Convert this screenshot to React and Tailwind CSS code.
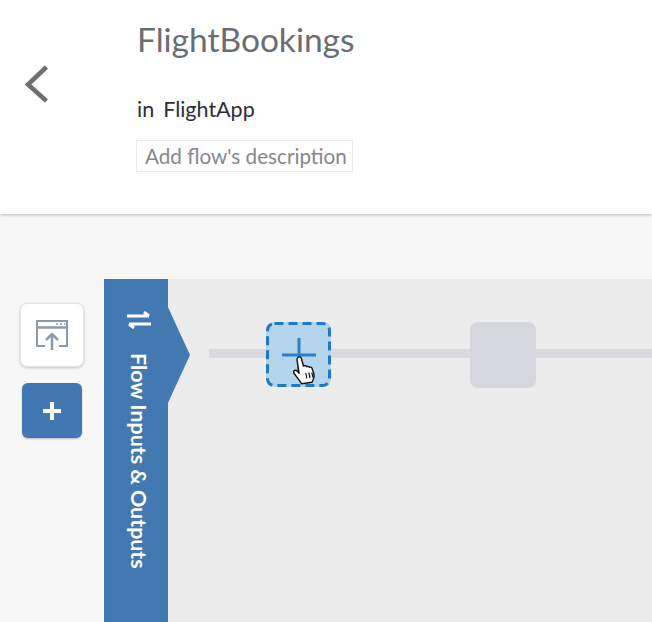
import React from 'react';

function BackChevron() {
  return (
    <svg width="26" height="38" viewBox="0 0 26 38" fill="none" stroke="#6f6f6f" strokeWidth="4.5">
      <path d="M22.5 2 L4 19.500 L22.500 36" />
    </svg>
  );
}

function PublishIcon() {
  return (
    <svg width="34" height="32" viewBox="0 0 34 32" fill="none" stroke="#8f99ac" strokeWidth="2">
      <path d="M10 27H2V2h30v25h-8" />
      <path d="M2 8.500h30" strokeWidth="2.500" />
      <path d="M21 5h2M25 5h2M29 5h1.500" strokeWidth="1.500" />
      <path d="M17 31V16M11 21l6-6 6 6" strokeWidth="2.500" />
    </svg>
  );
}

function SwapIcon() {
  return (
    <svg width="24" height="18" viewBox="0 0 24 18" fill="none" stroke="white" strokeWidth="3">
      <path d="M0 5h22M17 1l5 4" />
      <path d="M24 13H2M7 17l-5-4" />
    </svg>
  );
}

function HandCursor() {
  return (
    <svg width="26" height="30" viewBox="0 0 26 30" stroke="#111" strokeWidth="1.400" strokeLinejoin="round">
      <path
        fill="white"
        d="M6 2.500c1.300-1.200 3-.6 3.400 1l2 7.500 1-.3c1.200-.3 2 .2 2.400 1 .9-.5 2-.3 2.600.6 1-.5 2.100-.1 2.600.9l1.800 5.300c.7 2.500.4 4.600-.8 6.500l-1 2.200-10.500 1.500-2-3-5.300-7.200c-.9-1.300-.6-2.500.4-3 1-.5 2-.1 3 1l1.500 1.700L5 4.800c-.2-.9.300-1.800 1-2.300z"
      />
      <path fill="none" d="M13.800 18l1 5.500M16.800 17.500l1.200 5.500M19.800 17.500l1.200 5" strokeWidth="1.200" />
    </svg>
  );
}

export default function App() {
  return (
    <div className="h-[622px] w-[652px] overflow-hidden bg-[#f7f7f7] font-['Lato',sans-serif]">
      <header className="relative flex h-[214px] items-start bg-white pl-[24px] shadow-[0_1px_3px_rgba(0,0,0,0.25)]">
        <div className="mt-[65px] w-[113px] shrink-0">
          <BackChevron />
        </div>
        <div className="flex flex-col items-start">
          <h1 className="mt-[19px] text-[33.500px] leading-[40px] text-[#6a6d72]">FlightBookings</h1>
          <p className="mt-[38px] text-[21.500px] leading-[24px] text-[#2b2f36]">
            <span className="mr-[9px]">in</span>FlightApp
          </p>
          <div className="-ml-[1px] mt-[19px] border border-[#ececec] pl-[8px] pr-[5px] text-[20.700px] leading-[30px] text-[#85878c]">
            Add flow's description
          </div>
        </div>
      </header>

      <main className="flex pt-[65px]">
        <aside className="flex w-[104px] shrink-0 flex-col items-center pt-[24px]">
          <button className="flex h-[64px] w-[64px] items-center justify-center rounded-[7px] border border-[#e2e2e2] bg-white shadow-[0_1px_3px_rgba(0,0,0,0.2)]">
            <PublishIcon />
          </button>
          <button className="mt-[16px] flex h-[55px] w-[60px] items-center justify-center rounded-[6px] bg-[#4178b1] shadow-[0_1px_2px_rgba(0,0,0,0.25)]">
            <svg width="20" height="20" viewBox="0 0 20 20" fill="white">
              <path d="M8 1h4v7h7v4h-7v7H8v-7H1V8h7z" />
            </svg>
          </button>
        </aside>

        <section className="flex h-[343px] flex-1">
          <div className="relative z-10 flex w-[64px] shrink-0 flex-col items-center border-x border-t border-[#3b78b5] bg-[#4379b1] pl-[6px] pt-[31px]">
            <SwapIcon />
            <span className="mt-[24px] text-[21.400px] font-bold leading-[24px] text-white [writing-mode:vertical-rl]">
              Flow Inputs &amp; Outputs
            </span>
            <div className="absolute left-[62px] top-[25px] h-[100px] w-[23px] bg-[#4379b1] [clip-path:polygon(0_0,100%_50%,0_100%)]" />
          </div>

          <div className="relative flex flex-1 items-start gap-[139px] bg-[#ececec] pl-[98px] pt-[43px]">
            <div className="absolute left-[41px] right-0 top-[70px] h-[9px] bg-[#d9d9df]" />
            <div className="relative flex h-[65px] w-[65px] items-center justify-center rounded-[8px] bg-[#b5d5ec]">
              <svg className="absolute inset-0" width="65" height="65" viewBox="0 0 65 65" fill="none" stroke="#1f78c8" strokeWidth="3">
                <rect x="1.500" y="1.500" width="62" height="62" rx="7" strokeDasharray="9 5" />
              </svg>
              <svg width="34" height="34" viewBox="0 0 34 34" stroke="#2f7fc4" strokeWidth="3">
                <path d="M17 0v34M0 17h34" />
              </svg>
              <div className="absolute left-[26px] top-[33px]">
                <HandCursor />
              </div>
            </div>
            <div className="relative h-[66px] w-[66px] rounded-[8px] bg-[#d6d7de]" />
          </div>
        </section>
      </main>
    </div>
  );
}
